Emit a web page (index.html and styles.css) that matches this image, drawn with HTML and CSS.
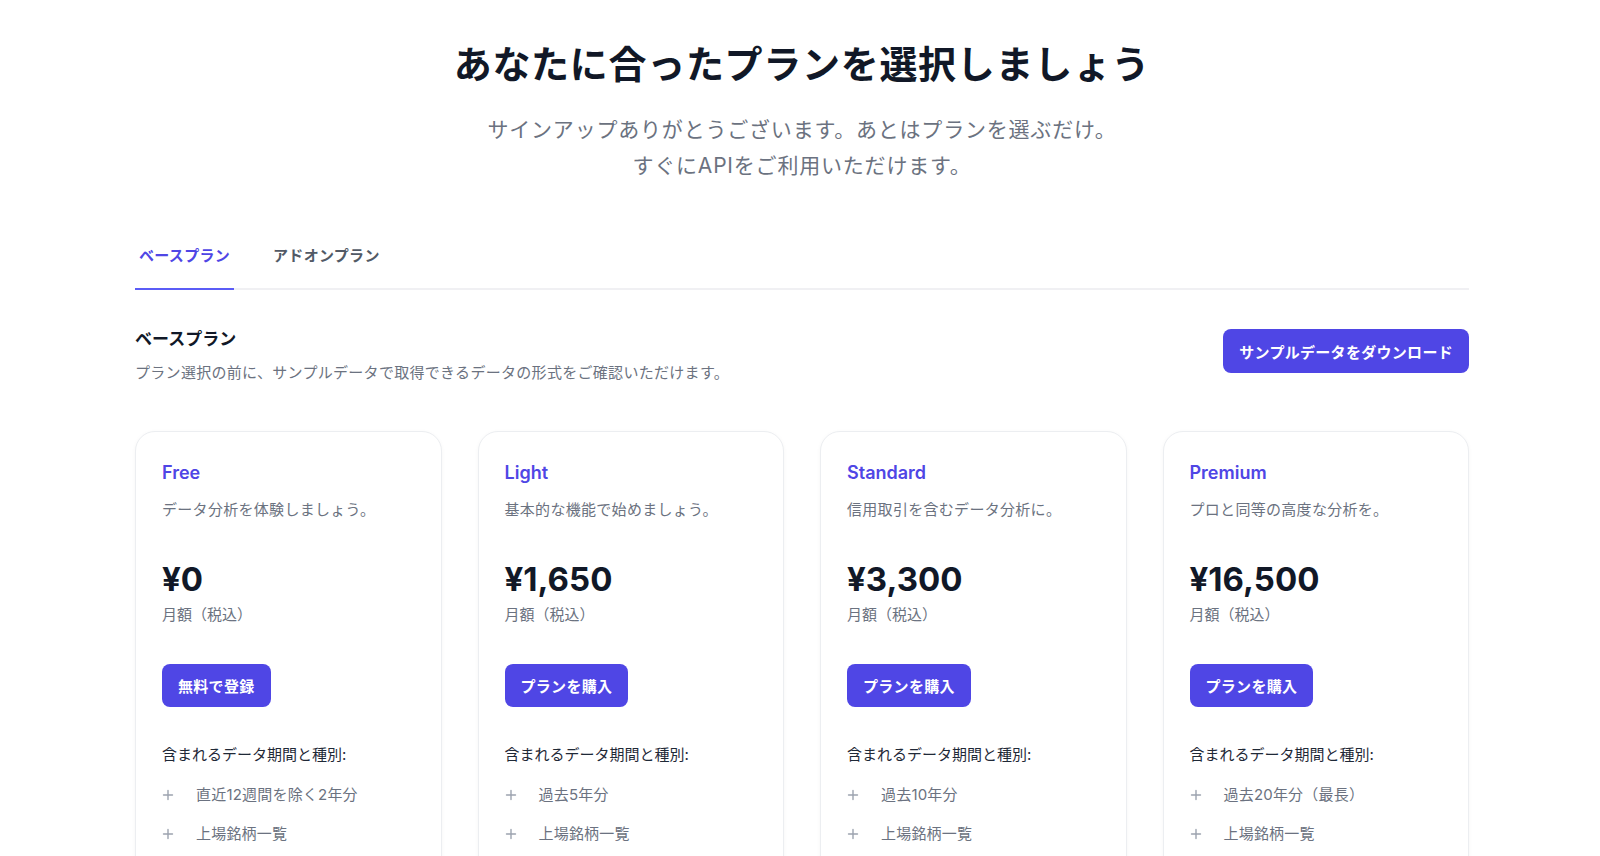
FILE: index.html
```html
<!DOCTYPE html>
<html lang="ja">
<head>
<meta charset="utf-8">
<title>プラン選択</title>
<link rel="stylesheet" href="styles.css">
</head>
<body>
<main class="page">
  <header class="hero">
    <h1 class="hero-title">あなたに合ったプランを選択しましょう</h1>
    <p class="hero-sub">サインアップありがとうございます。あとはプランを選ぶだけ。<br>すぐにAPIをご利用いただけます。</p>
  </header>

  <nav class="tabs">
    <a class="tab tab-active">ベースプラン</a>
    <a class="tab">アドオンプラン</a>
  </nav>

  <section class="section-head">
    <div class="section-text">
      <h2 class="section-title">ベースプラン</h2>
      <p class="section-desc">プラン選択の前に、サンプルデータで取得できるデータの形式をご確認いただけます。</p>
    </div>
    <button class="btn btn-download">サンプルデータをダウンロード</button>
  </section>

  <div class="cards">
    <article class="card">
      <h3 class="card-name">Free</h3>
      <p class="card-desc">データ分析を体験しましょう。</p>
      <p class="price">¥0</p>
      <p class="price-note">月額（税込）</p>
      <button class="btn btn-card">無料で登録</button>
      <p class="includes">含まれるデータ期間と種別:</p>
      <ul class="features">
        <li><svg class="plus" viewBox="0 0 12 12"><path d="M6 1.5v9M1.5 6h9"/></svg><span>直近12週間を除く2年分</span></li>
        <li><svg class="plus" viewBox="0 0 12 12"><path d="M6 1.5v9M1.5 6h9"/></svg><span>上場銘柄一覧</span></li>
      </ul>
    </article>
    <article class="card">
      <h3 class="card-name">Light</h3>
      <p class="card-desc">基本的な機能で始めましょう。</p>
      <p class="price">¥1,650</p>
      <p class="price-note">月額（税込）</p>
      <button class="btn btn-card">プランを購入</button>
      <p class="includes">含まれるデータ期間と種別:</p>
      <ul class="features">
        <li><svg class="plus" viewBox="0 0 12 12"><path d="M6 1.5v9M1.5 6h9"/></svg><span>過去5年分</span></li>
        <li><svg class="plus" viewBox="0 0 12 12"><path d="M6 1.5v9M1.5 6h9"/></svg><span>上場銘柄一覧</span></li>
      </ul>
    </article>
    <article class="card">
      <h3 class="card-name">Standard</h3>
      <p class="card-desc">信用取引を含むデータ分析に。</p>
      <p class="price">¥3,300</p>
      <p class="price-note">月額（税込）</p>
      <button class="btn btn-card">プランを購入</button>
      <p class="includes">含まれるデータ期間と種別:</p>
      <ul class="features">
        <li><svg class="plus" viewBox="0 0 12 12"><path d="M6 1.5v9M1.5 6h9"/></svg><span>過去10年分</span></li>
        <li><svg class="plus" viewBox="0 0 12 12"><path d="M6 1.5v9M1.5 6h9"/></svg><span>上場銘柄一覧</span></li>
      </ul>
    </article>
    <article class="card">
      <h3 class="card-name">Premium</h3>
      <p class="card-desc">プロと同等の高度な分析を。</p>
      <p class="price">¥16,500</p>
      <p class="price-note">月額（税込）</p>
      <button class="btn btn-card">プランを購入</button>
      <p class="includes">含まれるデータ期間と種別:</p>
      <ul class="features">
        <li><svg class="plus" viewBox="0 0 12 12"><path d="M6 1.5v9M1.5 6h9"/></svg><span>過去20年分（最長）</span></li>
        <li><svg class="plus" viewBox="0 0 12 12"><path d="M6 1.5v9M1.5 6h9"/></svg><span>上場銘柄一覧</span></li>
      </ul>
    </article>
  </div>
</main>
</body>
</html>
```

FILE: styles.css
```css
* { box-sizing: border-box; }

html, body {
  margin: 0;
  padding: 0;
  background: #ffffff;
}

body {
  padding-left: 4px;
  font-family: "Inter", "Noto Sans CJK JP", "Noto Sans", sans-serif;
  color: #111827;
  -webkit-font-smoothing: antialiased;
}

.page {
  max-width: 1334px;
  margin: 0 auto;
  padding-top: 40px;
}

.hero {
  text-align: center;
}

.hero-title {
  margin: 0;
  font-size: 38px;
  line-height: 48px;
  font-weight: 700;
  letter-spacing: 0.7px;
  color: #111827;
}

.hero-sub {
  margin: 24px 0 0;
  font-size: 21px;
  line-height: 36px;
  letter-spacing: 0.8px;
  color: #6b7280;
}

.tabs {
  display: flex;
  gap: 35px;
  margin-top: 60px;
  border-bottom: 2px solid #f0f0f3;
}

.tab {
  display: block;
  padding: 0 4px 20px;
  margin-bottom: -2px;
  border-bottom: 2px solid transparent;
  font-size: 15px;
  line-height: 24px;
  font-weight: 600;
  letter-spacing: 0.3px;
  color: #525a66;
  cursor: pointer;
}

.tab-active {
  color: #4f46e5;
  border-bottom-color: #5b5cf6;
}

.section-head {
  display: flex;
  justify-content: space-between;
  align-items: flex-start;
  margin-top: 37px;
}

.section-title {
  margin: 0;
  font-size: 17px;
  line-height: 24px;
  font-weight: 700;
  color: #111827;
}

.section-desc {
  margin: 10px 0 0;
  font-size: 15px;
  line-height: 24px;
  letter-spacing: 0.3px;
  color: #6b7280;
}

.btn {
  border: none;
  border-radius: 8px;
  background: #4f46e5;
  color: #ffffff;
  font-family: inherit;
  font-size: 15px;
  font-weight: 700;
  letter-spacing: 0.3px;
  padding: 0 16px;
  cursor: pointer;
}

.btn-download {
  height: 44px;
  margin-top: 2px;
}

.cards {
  display: grid;
  grid-template-columns: repeat(4, 1fr);
  gap: 36px;
  margin-top: 46px;
}

.card {
  border: 1px solid #eceef1;
  border-radius: 20px;
  padding: 27px 26px 48px;
  box-shadow: 0 1px 4px rgba(17, 24, 39, 0.04);
  background: #ffffff;
}

.card-name {
  margin: 0;
  font-size: 18px;
  line-height: 28px;
  font-weight: 600;
  color: #4f46e5;
}

.card-desc {
  margin: 11px 0 0;
  font-size: 15px;
  line-height: 24px;
  letter-spacing: 0.3px;
  color: #6b7280;
}

.price {
  margin: 37px 0 0;
  font-size: 33px;
  line-height: 40px;
  font-weight: 700;
  color: #111827;
}

.price-note {
  margin: 4px 0 0;
  font-size: 15px;
  line-height: 24px;
  color: #6b7280;
}

.btn-card {
  display: block;
  height: 43px;
  margin-top: 37px;
}

.includes {
  margin: 36px 0 0;
  font-size: 15px;
  line-height: 24px;
  color: #1f2937;
}

.features {
  list-style: none;
  margin: 16px 0 0;
  padding: 0;
  display: flex;
  flex-direction: column;
  gap: 15px;
}

.features li {
  display: flex;
  align-items: center;
  gap: 22px;
  font-size: 15px;
  line-height: 24px;
  letter-spacing: 0.2px;
  color: #6b7280;
}

.plus {
  width: 12px;
  height: 12px;
  flex: none;
  fill: none;
  stroke: #9ca3af;
  stroke-width: 1.4;
  stroke-linecap: round;
}
```
